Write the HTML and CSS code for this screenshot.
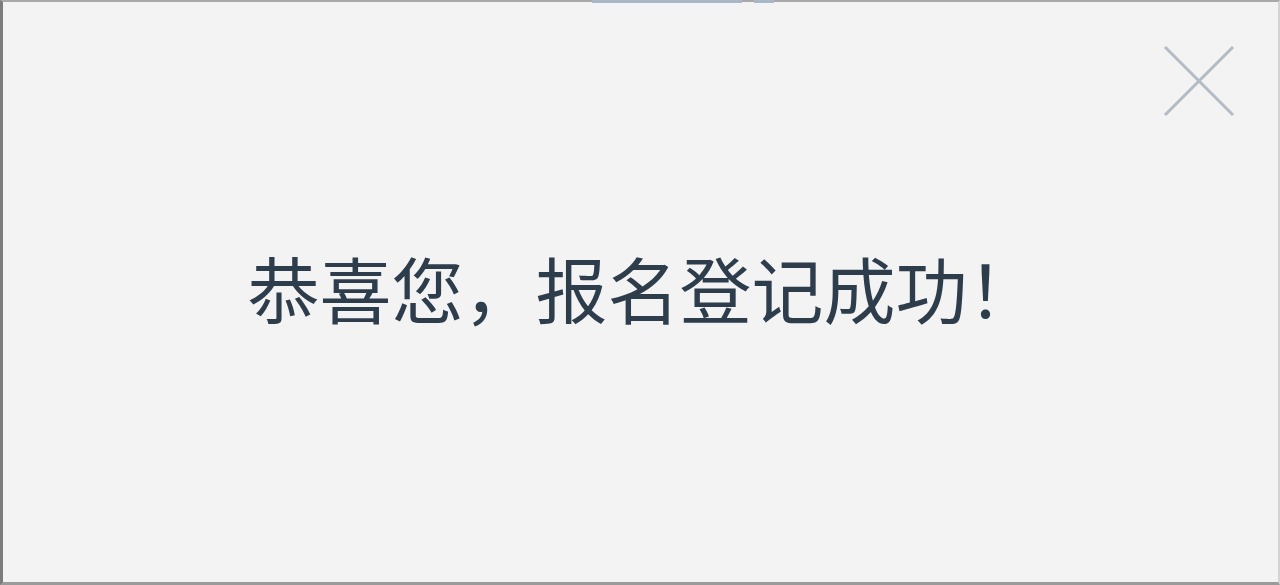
FILE: index.html
```html
<!DOCTYPE html>
<html lang="zh-CN">
<head>
<meta charset="utf-8">
<link rel="stylesheet" href="styles.css">
</head>
<body>
<div class="dialog">
  <div class="top-accent"><span class="seg seg-a"></span><span class="seg seg-b"></span></div>
  <button class="close" aria-label="关闭">
    <svg width="72" height="72" viewBox="0 0 72 72"><path d="M2 2 L70 70 M70 2 L2 70" stroke="#b3bbc3" stroke-width="3" fill="none"/></svg>
  </button>
  <p class="message">恭喜您，报名登记成功！</p>
</div>
</body>
</html>
```
FILE: styles.css
```css
html, body {
  margin: 0;
  padding: 0;
  width: 1280px;
  height: 585px;
  overflow: hidden;
  background: #f3f3f3;
}
.dialog {
  position: relative;
  box-sizing: border-box;
  width: 1280px;
  height: 585px;
  background: #f3f3f3;
  border-left: 3px solid #7c7c7c;
  border-top: 2px solid #a8a8a8;
  border-bottom: 3px solid #9a9a9a;
  border-right: 2px solid #d4d4d4;
  display: flex;
  align-items: center;
  justify-content: center;
}
.top-accent {
  position: absolute;
  top: -2px;
  left: 589px;
  display: flex;
  gap: 12px;
}
.seg { display: block; height: 3px; background: #a9b7c9; }
.seg-a { width: 150px; }
.seg-b { width: 20px; }
.close {
  position: absolute;
  top: 43px;
  right: 43px;
  width: 72px;
  height: 72px;
  padding: 0;
  border: 0;
  background: transparent;
}
.close svg { display: block; }
.message {
  margin: 0 0 10px 6px;
  font-family: "Noto Sans CJK SC", "Noto Sans", sans-serif;
  font-size: 72px;
  line-height: 1;
  color: #2e3d4c;
  font-weight: 400;
}
```
